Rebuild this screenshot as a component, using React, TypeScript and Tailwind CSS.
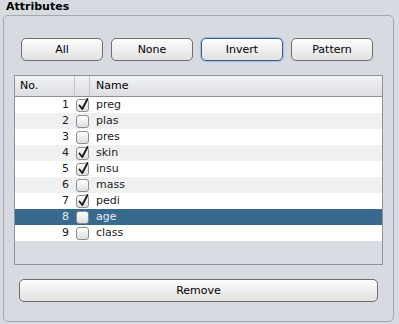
import React from "react";

const rows = [
  { no: 1, name: "preg", checked: true },
  { no: 2, name: "plas", checked: false },
  { no: 3, name: "pres", checked: false },
  { no: 4, name: "skin", checked: true },
  { no: 5, name: "insu", checked: true },
  { no: 6, name: "mass", checked: false },
  { no: 7, name: "pedi", checked: true },
  { no: 8, name: "age", checked: false },
  { no: 9, name: "class", checked: false },
];

function Check({ checked }: { checked: boolean }) {
  return (
    <div className="relative w-[13px] h-[13px] rounded-[3px] border border-[#8a8d92] bg-gradient-to-b from-[#ffffff] to-[#dcdde0]">
      {checked && (
        <svg className="absolute left-[1px] top-[-2px]" width="11" height="13" viewBox="0 0 11 13">
          <path d="M1.5 7.5 L4.3 11 L9.5 1" fill="none" stroke="#1c1c1c" strokeWidth="1.9" strokeLinecap="round" strokeLinejoin="round" />
        </svg>
      )}
    </div>
  );
}

function Btn({ label, focus }: { label: string; focus?: boolean }) {
  return (
    <button
      className={
        "h-[23px] w-[82px] pt-[1px] rounded-[5px] border text-[11px] text-black bg-gradient-to-b from-[#fefefe] via-[#eeeeee] to-[#e2e2e2] " +
        (focus ? "border-[#3f5f86] shadow-[0_0_0_1px_#9ec0e4]" : "border-[#6e6e6e]")
      }
    >
      {label}
    </button>
  );
}

export default function App() {
  return (
    <div className="w-[399px] h-[324px] bg-[#d7dae1] font-['DejaVu_Sans',sans-serif] text-[11px] text-black pl-[3px] pr-[5px] pb-[2px] flex flex-col">
      <div className="font-bold h-[15px] leading-[14px] pl-[3px]">Attributes</div>

      <div className="flex-1 border border-[#a3a7ae] rounded-[5px] flex flex-col pt-[22px]">
        <div className="flex gap-[8px] pl-[17px]">
          <Btn label="All" />
          <Btn label="None" />
          <Btn label="Invert" focus />
          <Btn label="Pattern" />
        </div>

        <div className="mt-[14px] ml-[10px] mr-[10px] h-[190px] border border-[#8f939a] bg-[#d9dce3] flex flex-col">
          <div className="flex h-[21px] border-b border-[#8d9097] bg-gradient-to-b from-[#f1f2f4] to-[#dcdee3] items-center">
            <div className="w-[59px] pl-[5px]">No.</div>
            <div className="w-[15px] h-full border-l border-[#c2c4c9]" />
            <div className="flex-1 h-full border-l border-[#c2c4c9] pl-[6px] flex items-center">Name</div>
          </div>
          {rows.map((r, i) => {
            const selected = r.no === 8;
            const bg = selected ? "bg-[#386a8e] text-[#e8eef3]" : i % 2 === 0 ? "bg-white text-[#1a1a1a]" : "bg-[#f0f0f0] text-[#1a1a1a]";
            return (
              <div key={r.no} className={"flex h-[16px] items-center " + bg}>
                <div className="w-[54px] text-right">{r.no}</div>
                <div className="w-[26px] flex justify-center pl-[1px]">
                  <Check checked={r.checked} />
                </div>
                <div className="pl-[1px]">{r.name}</div>
              </div>
            );
          })}
        </div>

        <div className="mt-[14px] ml-[15px] mr-[15px]">
          <button className="w-full h-[23px] pt-[1px] rounded-[5px] border border-[#6e6e6e] text-[11px] text-black bg-gradient-to-b from-[#fefefe] via-[#eeeeee] to-[#e2e2e2]">
            Remove
          </button>
        </div>
      </div>
    </div>
  );
}
